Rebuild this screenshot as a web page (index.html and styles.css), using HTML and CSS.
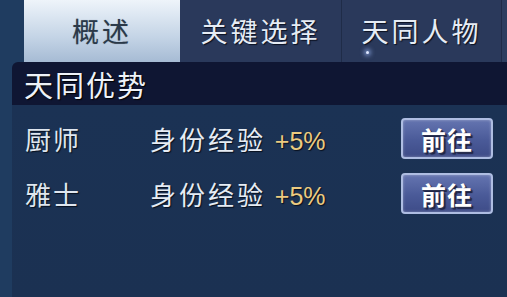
FILE: index.html
```html
<!DOCTYPE html>
<html lang="zh">
<head>
<meta charset="utf-8">
<link rel="stylesheet" href="styles.css">
</head>
<body>
<div class="screen">
  <div class="tabs">
    <div class="tab active">概述</div>
    <div class="tab t2">关键选择</div>
    <div class="tab t3">天同人物<span class="star"></span></div>
    <div class="tab-rest"></div>
  </div>
  <div class="panel">
    <div class="panel-head">天同优势</div>
    <div class="panel-body">
      <div class="row">
        <div class="name">厨师</div>
        <div class="stat">身份经验 <span class="bonus">+5%</span></div>
        <button class="go">前往</button>
      </div>
      <div class="row">
        <div class="name">雅士</div>
        <div class="stat">身份经验 <span class="bonus">+5%</span></div>
        <button class="go">前往</button>
      </div>
    </div>
  </div>
</div>
</body>
</html>
```

FILE: styles.css
```css
html, body {
  margin: 0;
  padding: 0;
  width: 507px;
  height: 297px;
  overflow: hidden;
  background: #1f3c60;
}
.screen {
  width: 507px;
  height: 297px;
  display: flex;
  flex-direction: column;
  font-family: "Noto Sans CJK SC", "Noto Sans", sans-serif;
}
.tabs {
  display: flex;
  height: 62px;
  margin-left: 24px;
  background: #2a395b;
}
.tab {
  display: flex;
  align-items: center;
  justify-content: center;
  font-size: 27px;
  letter-spacing: 3px;
  color: #e6ecf4;
  text-shadow: 1px 1px 1px #0a1020;
  box-sizing: border-box;
  position: relative;
  padding-bottom: 2px;
}
.tab.active {
  width: 156px;
  background: linear-gradient(#eef4fa, #c4d4e6 60%, #a6bbd4);
  color: #2b3949;
  text-shadow: 0 0 1px #8090a0;
}
.tab.t2 {
  width: 162px;
  border-right: 1px solid #1f2c48;
}
.tab.t3 {
  width: 160px;
  border-right: 1px solid #1f2c48;
}
.tab-rest {
  flex: 1;
  background: #2d3e60;
}
.star {
  position: absolute;
  left: 24px;
  top: 51px;
  width: 3px;
  height: 3px;
  border-radius: 50%;
  background: #dfe8ff;
  box-shadow: 0 0 4px 2px rgba(160, 190, 255, 0.6);
}
.panel {
  flex: 1;
  margin-left: 12px;
  display: flex;
  flex-direction: column;
}
.panel-head {
  height: 43px;
  background: #0f1633;
  border-top-left-radius: 6px;
  display: flex;
  align-items: center;
  padding-left: 12px;
  font-size: 29px;
  letter-spacing: 2px;
  color: #eef2f8;
  text-shadow: 1px 1px 1px #000;
}
.panel-body {
  flex: 1;
  background: linear-gradient(#1b3254, #1b3152);
  padding-top: 6px;
}
.row {
  height: 55px;
  display: flex;
  align-items: center;
}
.name {
  width: 125px;
  padding-left: 13px;
  font-size: 26px;
  letter-spacing: 2px;
  color: #dfe6ef;
  text-shadow: 1px 1px 1px #08101e;
}
.stat {
  width: 251px;
  font-size: 26px;
  letter-spacing: 3px;
  color: #e6ecf4;
  text-shadow: 1px 1px 1px #08101e;
}
.bonus {
  font-family: "Liberation Sans", Arial, sans-serif;
  letter-spacing: 0;
  color: #eccb80;
  font-size: 25px;
}
.go {
  width: 92px;
  height: 41px;
  margin: 0;
  padding: 0;
  border: 2px solid #aebde2;
  border-radius: 4px;
  background: linear-gradient(#6474b0, #4a5a98 55%, #3e4c88);
  box-shadow: inset 0 0 3px rgba(255, 255, 255, 0.35);
  font-family: "Noto Sans CJK SC", sans-serif;
  font-weight: bold;
  font-size: 25px;
  letter-spacing: 1px;
  color: #ffffff;
  text-shadow: 1px 1px 0 #2a3050, 2px 2px 1px #1a2040;
}
```
